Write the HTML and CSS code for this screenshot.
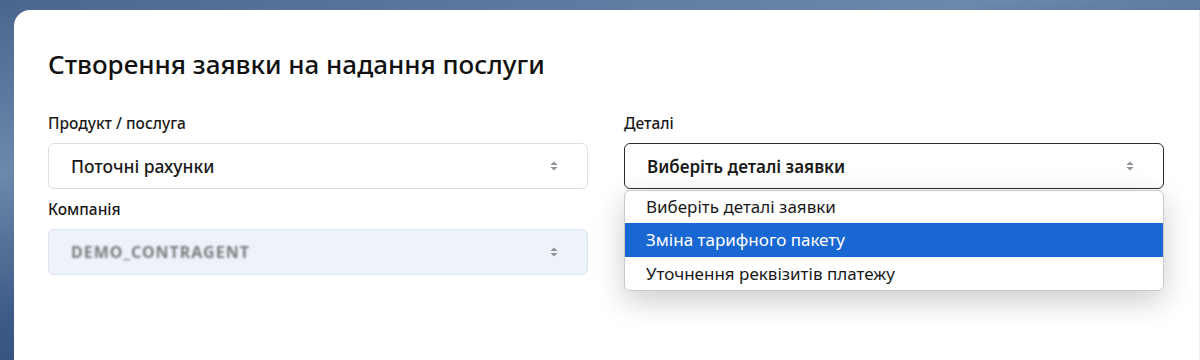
FILE: index.html
```html
<!DOCTYPE html>
<html lang="uk">
<head>
  <meta charset="UTF-8">
  <meta name="viewport" content="width=device-width, initial-scale=1.0">
  <title>Створення заявки</title>
  <link rel="stylesheet" href="styles.css">
</head>
<body>
  <div class="card">
    <h2 class="card-title">Створення заявки на надання послуги</h2>
    <div class="form-row">
      <div class="form-col">
        <label class="form-label">Продукт / послуга</label>
        <div class="form-select">
          <span class="select-value">Поточні рахунки</span>
          <svg class="select-arrow" width="10" height="12" viewBox="0 0 10 12"><path d="M5 1.5 L8.5 5 H1.5 Z M5 10.5 L8.5 7 H1.5 Z" fill="#8a9199"/></svg>
        </div>
        <label class="form-label">Компанія</label>
        <div class="form-select disabled">
          <span class="select-value blurred">DEMO_CONTRAGENT</span>
          <svg class="select-arrow" width="10" height="12" viewBox="0 0 10 12"><path d="M5 1.5 L8.5 5 H1.5 Z M5 10.5 L8.5 7 H1.5 Z" fill="#8a9199"/></svg>
        </div>
      </div>
      <div class="form-col">
        <label class="form-label">Деталі</label>
        <div class="dropdown">
          <div class="form-select focused">
            <span class="select-value strong">Виберіть деталі заявки</span>
            <svg class="select-arrow" width="10" height="12" viewBox="0 0 10 12"><path d="M5 1.5 L8.5 5 H1.5 Z M5 10.5 L8.5 7 H1.5 Z" fill="#8a9199"/></svg>
          </div>
          <ul class="options">
            <li>Виберіть деталі заявки</li>
            <li class="active">Зміна тарифного пакету</li>
            <li>Уточнення реквізитів платежу</li>
          </ul>
        </div>
      </div>
    </div>
  </div>
</body>
</html>
```

FILE: styles.css
```css
body {
  margin: 0;
  height: 360px;
  overflow: hidden;
  font-family: "Noto Sans", "Open Sans", sans-serif;
  color: #1a1a1a;
  background: linear-gradient(170deg, #4a6690 0%, #6c88ab 30%, #3b5a85 55%, #1b3a64 100%);
  padding: 10px 0 0 14px;
}
.card {
  background: #fff;
  border-top-left-radius: 16px;
  height: 350px;
  padding: 35px 35px 0 34px;
  box-sizing: border-box;
  border-right: 1px solid #ececec;
}
.card-title {
  margin: 0 0 30px;
  font-size: 26px;
  font-weight: 500;
  line-height: 38px;
  color: #111;
}
.form-row {
  display: grid;
  grid-template-columns: 1fr 1fr;
  column-gap: 36px;
}
.form-label {
  display: block;
  font-size: 15.5px;
  font-weight: 500;
  line-height: 20px;
  margin-bottom: 10px;
}
.form-select {
  display: flex;
  align-items: center;
  justify-content: space-between;
  height: 46px;
  box-sizing: border-box;
  border: 1px solid #dcdfe3;
  border-radius: 6px;
  padding: 0 28px 0 22px;
  margin-bottom: 10px;
  font-size: 17.5px;
  font-weight: 500;
}
.form-select.disabled {
  background: #eef2fb;
  border-color: #dfe4ef;
}
.form-select.focused {
  border: 1px solid #2b2b2b;
}
.select-value.strong {
  font-weight: 600;
  font-size: 17px;
}
.select-value.blurred {
  color: #7c7c7c;
  letter-spacing: 1px;
  font-size: 16px;
  font-weight: 700;
  filter: blur(1.2px);
}
.dropdown {
  position: relative;
}
.options {
  position: absolute;
  left: 0;
  right: 0;
  top: 47px;
  margin: 0;
  padding: 0;
  list-style: none;
  background: #fff;
  border: 1px solid #c9c9c9;
  border-radius: 6px;
  box-shadow: 0 10px 30px rgba(0,0,0,0.2);
  overflow: hidden;
}
.options li {
  height: 33px;
  line-height: 33px;
  padding-left: 21px;
  font-size: 17px;
}
.options li:first-child {
  height: 32px;
  line-height: 32px;
}
.options li.active {
  background: #1967d2;
  color: #fff;
  height: 34px;
  line-height: 34px;
}
```
